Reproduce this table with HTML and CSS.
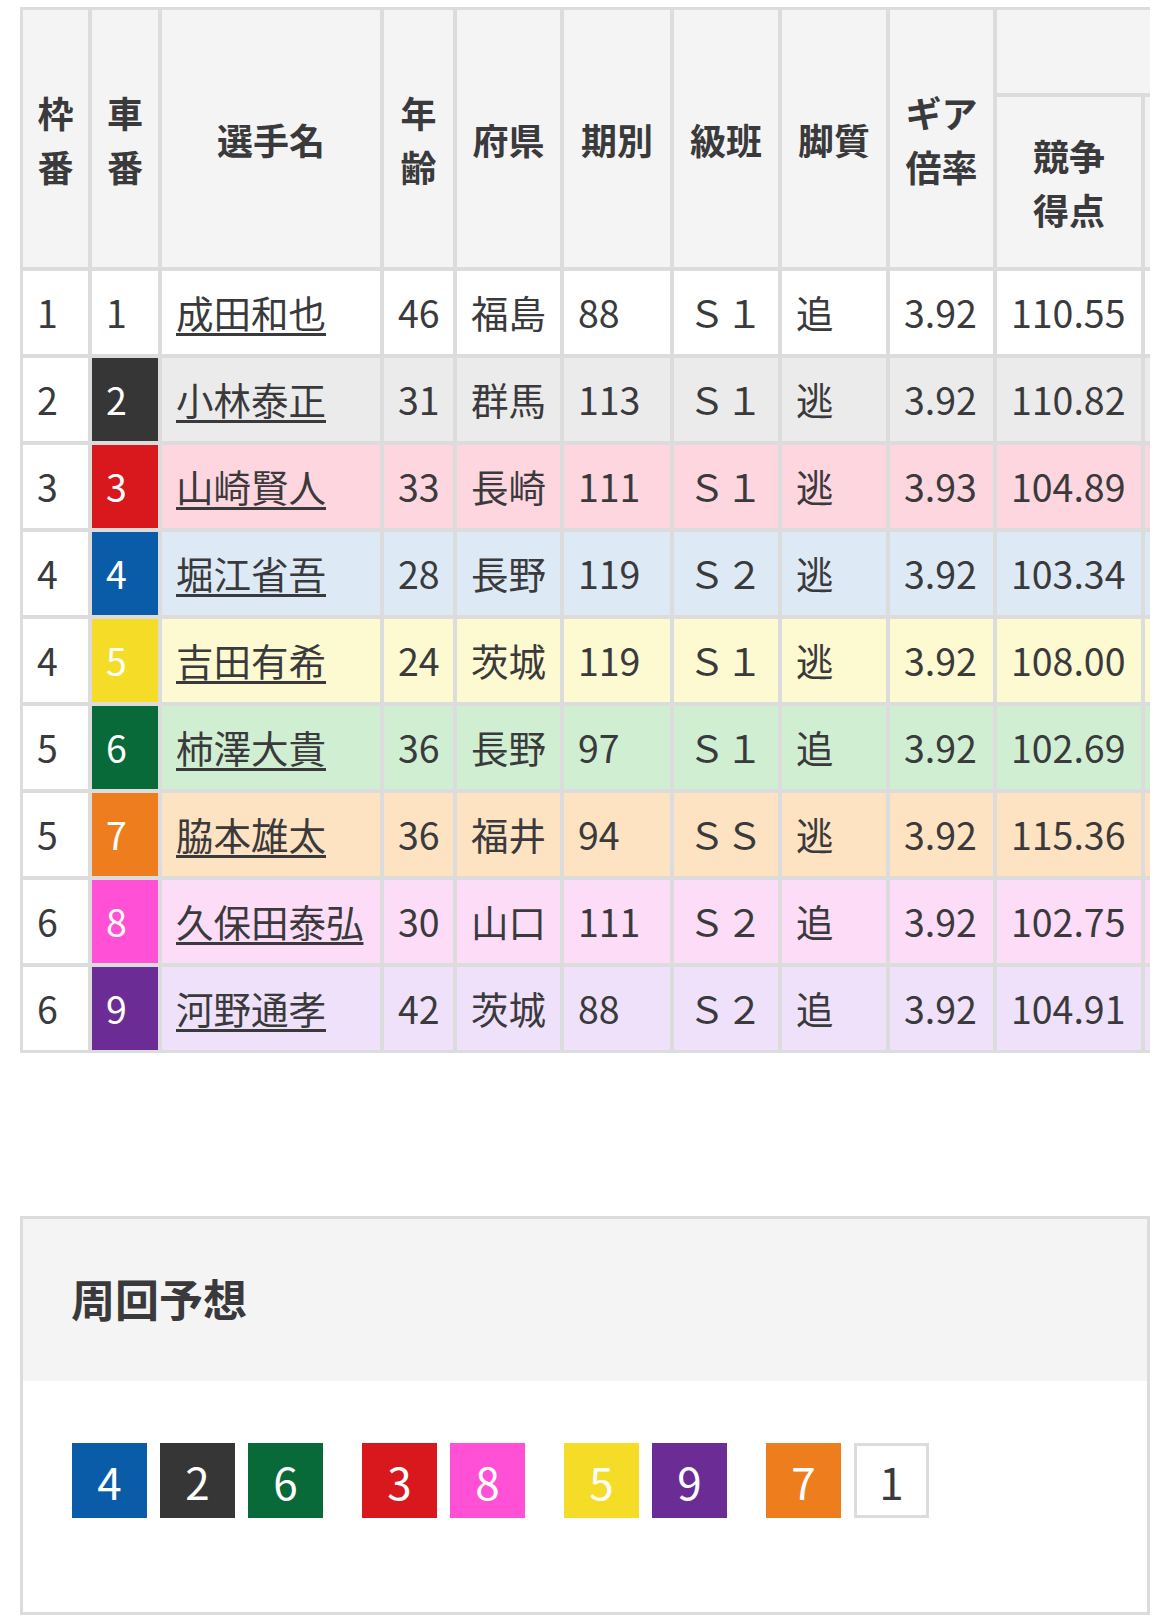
FILE: index.html
```html
<!DOCTYPE html>
<html lang="ja">
<head>
<meta charset="utf-8">
<title>出走表</title>
<link rel="stylesheet" href="styles.css">
</head>
<body>
<div class="table-wrap">
  <table class="entry">
    <colgroup>
      <col class="c-waku"><col class="c-car"><col class="c-name"><col class="c-age"><col class="c-pref"><col class="c-term"><col class="c-class"><col class="c-leg"><col class="c-gear"><col class="c-score"><col class="c-more">
    </colgroup>
    <thead>
      <tr class="h1">
        <th rowspan="2">枠<br>番</th>
        <th rowspan="2">車<br>番</th>
        <th rowspan="2">選手名</th>
        <th rowspan="2">年<br>齢</th>
        <th rowspan="2">府県</th>
        <th rowspan="2">期別</th>
        <th rowspan="2">級班</th>
        <th rowspan="2">脚質</th>
        <th rowspan="2">ギア<br>倍率</th>
        <th colspan="2"></th>
      </tr>
      <tr class="h2">
        <th>競争<br>得点</th>
        <th></th>
      </tr>
    </thead>
    <tbody>
      <tr class="r1"><td>1</td><td class="car">1</td><td><a href="#">成田和也</a></td><td>46</td><td>福島</td><td>88</td><td>Ｓ１</td><td>追</td><td>3.92</td><td>110.55</td><td></td></tr>
      <tr class="r2"><td>2</td><td class="car">2</td><td><a href="#">小林泰正</a></td><td>31</td><td>群馬</td><td>113</td><td>Ｓ１</td><td>逃</td><td>3.92</td><td>110.82</td><td></td></tr>
      <tr class="r3"><td>3</td><td class="car">3</td><td><a href="#">山崎賢人</a></td><td>33</td><td>長崎</td><td>111</td><td>Ｓ１</td><td>逃</td><td>3.93</td><td>104.89</td><td></td></tr>
      <tr class="r4"><td>4</td><td class="car">4</td><td><a href="#">堀江省吾</a></td><td>28</td><td>長野</td><td>119</td><td>Ｓ２</td><td>逃</td><td>3.92</td><td>103.34</td><td></td></tr>
      <tr class="r5"><td>4</td><td class="car">5</td><td><a href="#">吉田有希</a></td><td>24</td><td>茨城</td><td>119</td><td>Ｓ１</td><td>逃</td><td>3.92</td><td>108.00</td><td></td></tr>
      <tr class="r6"><td>5</td><td class="car">6</td><td><a href="#">柿澤大貴</a></td><td>36</td><td>長野</td><td>97</td><td>Ｓ１</td><td>追</td><td>3.92</td><td>102.69</td><td></td></tr>
      <tr class="r7"><td>5</td><td class="car">7</td><td><a href="#">脇本雄太</a></td><td>36</td><td>福井</td><td>94</td><td>ＳＳ</td><td>逃</td><td>3.92</td><td>115.36</td><td></td></tr>
      <tr class="r8"><td>6</td><td class="car">8</td><td><a href="#">久保田泰弘</a></td><td>30</td><td>山口</td><td>111</td><td>Ｓ２</td><td>追</td><td>3.92</td><td>102.75</td><td></td></tr>
      <tr class="r9"><td>6</td><td class="car">9</td><td><a href="#">河野通孝</a></td><td>42</td><td>茨城</td><td>88</td><td>Ｓ２</td><td>追</td><td>3.92</td><td>104.91</td><td></td></tr>
    </tbody>
  </table>
</div>

<section class="lap">
  <h2 class="lap-title">周回予想</h2>
  <div class="lap-body">
    <div class="lap-line">
      <div class="lap-group"><span class="chip n4">4</span><span class="chip n2">2</span><span class="chip n6">6</span></div>
      <div class="lap-group"><span class="chip n3">3</span><span class="chip n8">8</span></div>
      <div class="lap-group"><span class="chip n5">5</span><span class="chip n9">9</span></div>
      <div class="lap-group"><span class="chip n7">7</span><span class="chip n1">1</span></div>
    </div>
  </div>
</section>
</body>
</html>
```

FILE: styles.css
```css
* {
  box-sizing: border-box;
}

body {
  margin: 0;
  background: #fff;
  color: #3a3a3c;
  font-family: "Noto Sans CJK JP", "Noto Sans", sans-serif;
}

.table-wrap {
  margin: 7px 0 0 20px;
  width: 1130px;
  overflow: hidden;
}

.entry {
  table-layout: fixed;
  width: 1324px;
  border-collapse: separate;
  border-spacing: 0;
  border: 1px solid #dcdcdc;
  font-size: 36px;
  line-height: 54px;
}

.c-waku { width: 69px; }
.c-car { width: 70px; }
.c-name { width: 222px; }
.c-age { width: 73px; }
.c-pref { width: 107px; }
.c-term { width: 110px; }
.c-class { width: 108px; }
.c-leg { width: 108px; }
.c-gear { width: 107px; }
.c-score { width: 148px; }
.c-more { width: 200px; }

.entry th,
.entry td {
  border: 2px solid #dcdcdc;
  padding: 0 14px;
  vertical-align: middle;
  white-space: nowrap;
}

.entry th {
  background: #f4f4f4;
  font-weight: 700;
  text-align: center;
  padding: 0;
}

.entry .h1 { height: 87px; }
.entry .h2 { height: 174px; }

.entry tbody tr { height: 87px; }

.entry td {
  text-align: left;
  font-size: 37.5px;
  padding-bottom: 2px;
}

.entry td:first-child {
  background: #fff;
}

.entry td a {
  color: inherit;
  text-decoration: underline;
  text-decoration-thickness: 3px;
  text-underline-offset: 5px;
}

.entry td.car {
  color: #fff;
}

.r1 td { background: #fff; }
.r1 td.car { background: #fff; color: #3a3a3c; }

.r2 td { background: #ebebeb; }
.r2 td.car { background: #363636; }

.r3 td { background: #fdd6df; }
.r3 td.car { background: #d8181c; }

.r4 td { background: #ddeaf6; }
.r4 td.car { background: #0b5ca8; }

.r5 td { background: #fdf9d0; }
.r5 td.car { background: #f5dc26; }

.r6 td { background: #d0efd2; }
.r6 td.car { background: #086a38; }

.r7 td { background: #fee3c3; }
.r7 td.car { background: #ee7d1d; }

.r8 td { background: #fddcf8; }
.r8 td.car { background: #ff50d6; }

.r9 td { background: #f0e1fb; }
.r9 td.car { background: #6b2c96; }

/* lap prediction */
.lap {
  margin: 163px 0 0 20px;
  width: 1130px;
  border: 3px solid #dcdcdc;
}

.lap-title {
  margin: 0;
  height: 162px;
  display: flex;
  align-items: center;
  padding: 0 0 4px 48px;
  background: #f4f4f4;
  font-size: 44px;
  font-weight: 700;
  line-height: 1;
}

.lap-body {
  padding: 62px 0 94px 49px;
}

.lap-line {
  display: flex;
  gap: 39px;
}

.lap-group {
  display: flex;
  gap: 13px;
}

.chip {
  width: 75px;
  height: 75px;
  display: flex;
  align-items: center;
  justify-content: center;
  color: #fff;
  font-size: 44px;
  line-height: 1;
}

.n1 { background: #fff; color: #3a3a3c; border: 3px solid #dcdcdc; }
.n2 { background: #363636; }
.n3 { background: #d8181c; }
.n4 { background: #0b5ca8; }
.n5 { background: #f5dc26; }
.n6 { background: #086a38; }
.n7 { background: #ee7d1d; }
.n8 { background: #ff50d6; }
.n9 { background: #6b2c96; }
```
